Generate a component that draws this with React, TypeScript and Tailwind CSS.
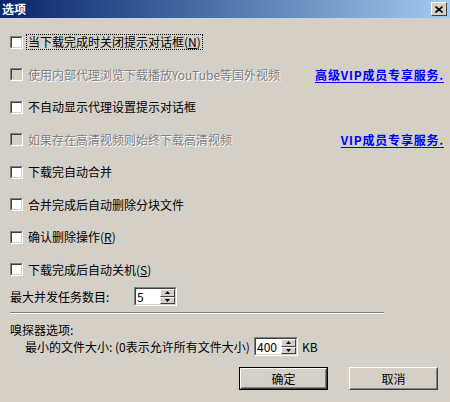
import React from "react";

const FONT = "font-['Noto_Sans_CJK_SC','Noto_Sans',sans-serif]";

function Check({ disabled = false }: { disabled?: boolean }) {
  return (
    <span className="block w-[13px] h-[13px] shrink-0 border border-t-[#808080] border-l-[#808080] border-r-white border-b-white">
      <span
        className={`block w-full h-full border border-t-[#404040] border-l-[#404040] border-r-[#d4d0c8] border-b-[#d4d0c8] ${
          disabled ? "bg-[#d4d0c8]" : "bg-white"
        }`}
      />
    </span>
  );
}

function Row({
  label,
  disabled = false,
  focus = false,
  link,
}: {
  label: React.ReactNode;
  disabled?: boolean;
  focus?: boolean;
  link?: string;
}) {
  return (
    <div className="flex items-center h-[32.5px]">
      <Check disabled={disabled} />
      <span
        className={`ml-[4px] px-[1px] leading-[14px] whitespace-nowrap ${
          focus ? "outline outline-1 outline-dotted outline-black" : ""
        } ${disabled ? "text-[#808080] [text-shadow:1px_1px_0_#ffffff]" : "text-black"}`}
      >
        {label}
      </span>
      {link && (
        <span className="ml-auto mr-[-2px] text-[12px] font-bold tracking-[0.8px] text-[#0000ff] underline underline-offset-[2px] whitespace-nowrap">
          {link}
        </span>
      )}
    </div>
  );
}

function Arrow({ up }: { up: boolean }) {
  return (
    <svg width="5" height="3" viewBox="0 0 5 3">
      {up ? <path d="M2.5 0 L5 3 L0 3 Z" fill="#000" /> : <path d="M0 0 L5 0 L2.5 3 Z" fill="#000" />}
    </svg>
  );
}

function Spin({ value, w }: { value: string; w: string }) {
  return (
    <div className={`${w} h-[19px] shrink-0 border border-t-[#808080] border-l-[#808080] border-r-white border-b-white`}>
      <div className="flex w-full h-full border border-t-[#404040] border-l-[#404040] border-r-[#d4d0c8] border-b-[#d4d0c8] bg-white">
        <span className="flex-1 pl-[1px] text-[12px] leading-[15px] text-black">{value}</span>
        <div className="flex flex-col w-[15px] h-full">
          <div className="flex-1 flex items-center justify-center bg-[#d4d0c8] border border-t-white border-l-white border-r-[#404040] border-b-[#404040]">
            <Arrow up />
          </div>
          <div className="flex-1 flex items-center justify-center bg-[#d4d0c8] border border-t-white border-l-white border-r-[#404040] border-b-[#404040]">
            <Arrow up={false} />
          </div>
        </div>
      </div>
    </div>
  );
}

function Button({ label, def = false }: { label: string; def?: boolean }) {
  return (
    <div className={`w-[89px] h-[23px] ${def ? "border border-black" : ""}`}>
      <div className="w-full h-full border border-t-white border-l-white border-r-[#404040] border-b-[#404040]">
        <div className="w-full h-full flex items-center justify-center border border-t-[#d4d0c8] border-l-[#d4d0c8] border-r-[#808080] border-b-[#808080] text-[12px] text-black">
          {label}
        </div>
      </div>
    </div>
  );
}

export default function App() {
  return (
    <div className={`w-[450px] h-[402px] bg-[#d4d0c8] flex flex-col text-[12px] ${FONT} overflow-hidden`}>
      <div className="h-[18px] shrink-0 flex items-center justify-between pl-[2px] pr-[3px] bg-gradient-to-r from-[#0a246a] to-[#a6caf0]">
        <span className="text-white font-bold text-[12px] leading-[14px]">选项</span>
        <div className="w-[16px] h-[14px] bg-[#d4d0c8] border border-t-white border-l-white border-r-[#404040] border-b-[#404040] flex items-center justify-center">
          <svg width="8" height="7" viewBox="0 0 8 7">
            <path d="M0.5 0.5 L7.5 6.5 M7.5 0.5 L0.5 6.5" stroke="#000" strokeWidth="1.6" />
          </svg>
        </div>
      </div>

      <div className="flex flex-col pl-[10px] pr-[8px] pt-[8px]">
        <Row
          label={
            <>
              当下载完成时关闭提示对话框(<span className="underline">N</span>)
            </>
          }
          focus
        />
        <Row label="使用内部代理浏览下载播放YouTube等国外视频" disabled link="高级VIP成员专享服务." />
        <Row label="不自动显示代理设置提示对话框" />
        <Row label="如果存在高清视频则始终下载高清视频" disabled link="VIP成员专享服务." />
        <Row label="下载完自动合并" />
        <Row label="合并完成后自动删除分块文件" />
        <Row
          label={
            <>
              确认删除操作(<span className="underline">R</span>)
            </>
          }
        />
        <Row
          label={
            <>
              下载完成后自动关机(<span className="underline">S</span>)
            </>
          }
        />

        <div className="flex items-center h-[19px] mt-[1px]">
          <span className="w-[124px] text-black whitespace-nowrap">最大并发任务数目:</span>
          <Spin value="5" w="w-[43px]" />
        </div>

        <div className="mt-[6px] w-[374px] h-[2px] border-t border-t-[#808080] border-b border-b-white" />

        <div className="mt-[8px] h-[15px] leading-[15px] text-black">嗅探器选项:</div>

        <div className="flex items-center h-[19px] pl-[15px]">
          <span className="w-[229px] text-black whitespace-nowrap">最小的文件大小: (0表示允许所有文件大小)</span>
          <Spin value="400" w="w-[44px]" />
          <span className="ml-[4px] text-black">KB</span>
        </div>

        <div className="flex justify-end gap-[21px] mt-[11px] pr-[4px]">
          <Button label="确定" def />
          <Button label="取消" />
        </div>
      </div>
    </div>
  );
}
